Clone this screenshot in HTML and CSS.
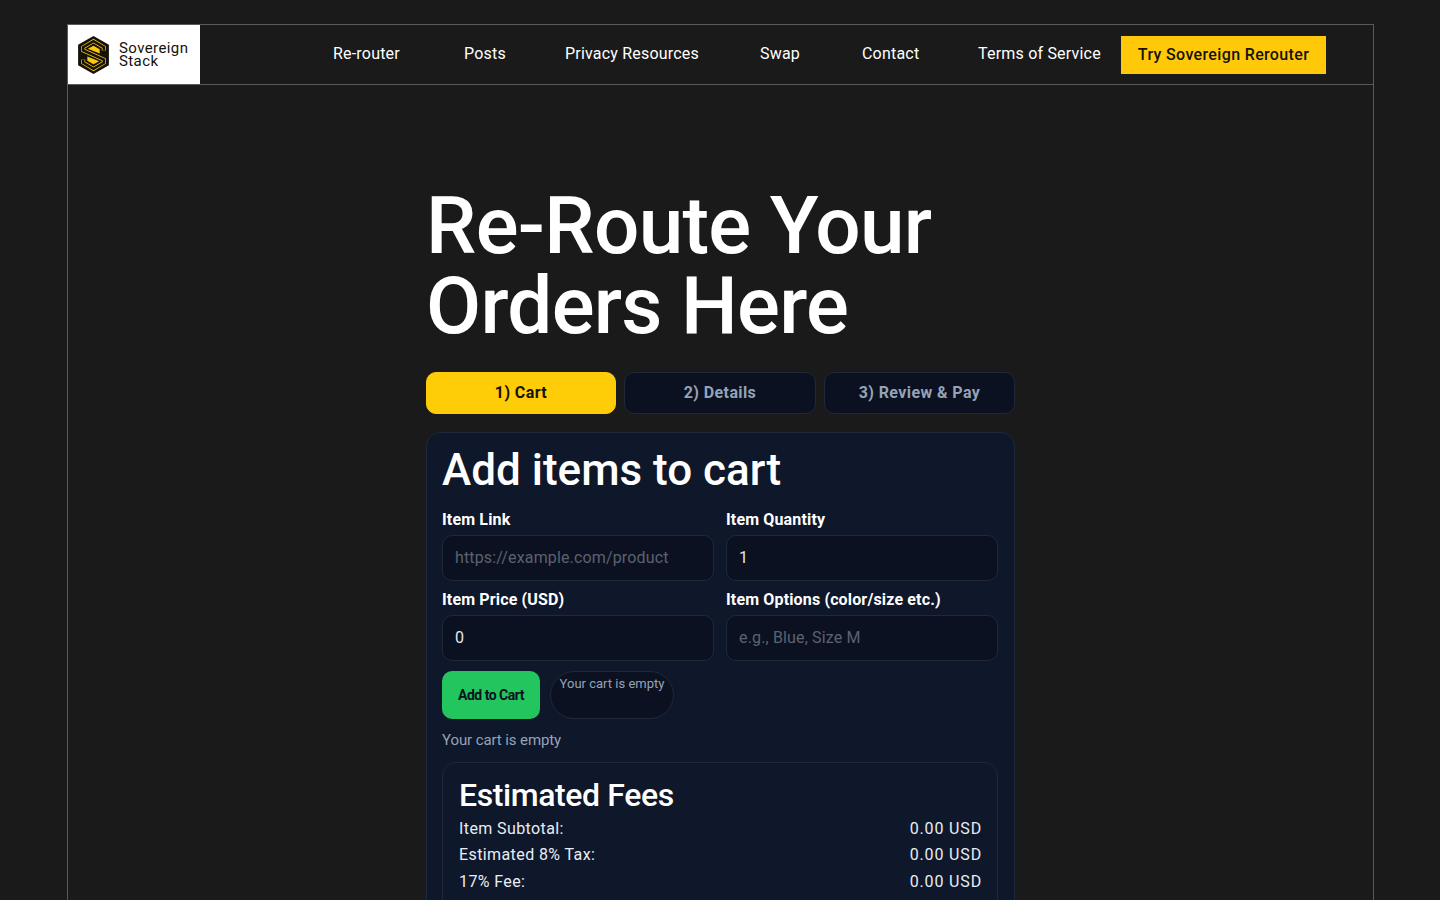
FILE: index.html
```html
<!DOCTYPE html>
<html lang="en">
<head>
    <meta charset="UTF-8">
    <meta name="viewport" content="width=device-width, initial-scale=1.0">
    <title>Sovereign Stack Re-router</title>
    <link rel="stylesheet" href="styles.css">
</head>
<body>
    <div class="frame">
        <header class="topbar">
            <a class="logo" href="#">
                <svg class="logo-mark" viewBox="0 0 30 37" width="31" height="38">
                    <polygon points="15,0 30,8.500 30,28.500 15,37 0,28.500 0,8.500" fill="#15120a"/>
                    <polygon points="15,9.500 21,13 21,17 9.500,12.500" fill="#fcc70c"/>
                    <polygon points="15,27.500 9,24 9,20 20.500,24.500" fill="#fcc70c"/>
                    <path d="M25 14V11L15 5 5 11V14L25 23V26L15 32 5 26V23" fill="none" stroke="#fcc70c" stroke-width="3.800"/>
                    <path d="M25 14V11L15 5 5 11V14L25 23V26L15 32 5 26V23" fill="none" stroke="#15120a" stroke-width="2.400"/>
                </svg>
                <span class="logo-text">Sovereign<br>Stack</span>
            </a>
            <nav class="nav">
                <a href="#">Re-router</a>
                <a href="#">Posts</a>
                <a href="#">Privacy Resources</a>
                <a href="#">Swap</a>
                <a href="#">Contact</a>
                <a href="#">Terms of Service</a>
            </nav>
            <a class="try-btn" href="#">Try Sovereign Rerouter</a>
        </header>

        <main class="content">
            <h1>Re-Route Your<br>Orders Here</h1>

            <div class="tabs">
                <button class="tab active" type="button">1) Cart</button>
                <button class="tab" type="button">2) Details</button>
                <button class="tab" type="button">3) Review &amp; Pay</button>
            </div>

            <section class="card">
                <h2>Add items to cart</h2>
                <div class="fields">
                    <div class="field">
                        <label for="item_link">Item Link</label>
                        <input type="text" id="item_link" placeholder="https://example.com/product">
                    </div>
                    <div class="field">
                        <label for="item_qty">Item Quantity</label>
                        <input type="text" id="item_qty" value="1">
                    </div>
                    <div class="field">
                        <label for="item_price">Item Price (USD)</label>
                        <input type="text" id="item_price" value="0">
                    </div>
                    <div class="field">
                        <label for="item_options">Item Options (color/size etc.)</label>
                        <input type="text" id="item_options" placeholder="e.g., Blue, Size M">
                    </div>
                </div>

                <div class="cart-actions">
                    <button class="add-btn" type="button">Add to Cart</button>
                    <span class="cart-pill">Your cart is empty</span>
                </div>
                <p class="cart-note">Your cart is empty</p>

                <div class="fees">
                    <h3>Estimated Fees</h3>
                    <div class="fee-row"><span>Item Subtotal:</span><span class="fee-value">0.00 USD</span></div>
                    <div class="fee-row"><span>Estimated 8% Tax:</span><span class="fee-value">0.00 USD</span></div>
                    <div class="fee-row"><span>17% Fee:</span><span class="fee-value">0.00 USD</span></div>
                </div>
            </section>
        </main>
    </div>
</body>
</html>
```

FILE: styles.css
```css
html, body {
    height: 900px;
    overflow: hidden;
}

body {
    margin: 0;
    padding: 24px 66px 0 67px;
    background-color: #1a1a1a;
    color: #fff;
    font-family: Roboto, "Liberation Sans", sans-serif;
}

a {
    color: inherit;
    text-decoration: none;
}

.frame {
    height: 900px;
    border: 1px solid #5a5a5a;
    border-bottom: none;
}

.topbar {
    display: flex;
    align-items: center;
    height: 59px;
    border-bottom: 1px solid #5a5a5a;
}

.logo {
    display: flex;
    align-items: center;
    gap: 10px;
    width: 122px;
    height: 59px;
    padding-left: 10px;
    background-color: #fff;
    color: #15120a;
}

.logo-text {
    font-size: 15px;
    line-height: 13px;
    letter-spacing: 0.4px;
}

.nav {
    display: grid;
    grid-template-columns: 71px 41px 135px 42px 56px 121px;
    gap: 60px;
    margin-left: 133px;
    padding-bottom: 2px;
    font-size: 16px;
    letter-spacing: 0.2px;
    white-space: nowrap;
}

.try-btn {
    margin-left: 22px;
    width: 205px;
    height: 38px;
    line-height: 38px;
    text-align: center;
    background-color: #ffc90a;
    color: #15120a;
    font-size: 16px;
    font-weight: 500;
    letter-spacing: 0.35px;
}

.content {
    width: 589px;
    margin-left: 358px;
    padding-top: 101px;
}

h1 {
    margin: 0 0 26px;
    font-size: 80px;
    line-height: 80px;
    font-weight: 500;
    letter-spacing: -0.7px;
}

.tabs {
    display: grid;
    grid-template-columns: 190px 192px 191px;
    gap: 8px;
    margin-bottom: 18px;
}

.tab {
    height: 42px;
    padding: 0 0 2px;
    border: 1px solid #1e293b;
    border-radius: 10px;
    background-color: #0b1120;
    color: #94a3b8;
    font-family: inherit;
    font-size: 16px;
    font-weight: 700;
    letter-spacing: 0.4px;
}

.tab.active {
    background-color: #ffcc08;
    border-color: #ffcc08;
    color: #15120a;
}

.card {
    padding: 12px 16px 12px 15px;
    background-color: #0f172a;
    border: 1px solid #1e293b;
    border-radius: 14px;
}

h2 {
    margin: 0 0 15px;
    font-size: 44px;
    line-height: 50px;
    font-weight: 500;
}

.fields {
    display: grid;
    grid-template-columns: 1fr 1fr;
    gap: 9px 12px;
}

.field label {
    display: block;
    margin-bottom: 5px;
    font-size: 16px;
    line-height: 20px;
    font-weight: 700;
    letter-spacing: 0.15px;
}

.field input {
    display: block;
    box-sizing: border-box;
    width: 100%;
    height: 46px;
    padding: 0 12px 2px;
    background-color: #0b1120;
    border: 1px solid #1e293b;
    border-radius: 10px;
    color: #e5e7eb;
    font-family: inherit;
    font-size: 16px;
    letter-spacing: 0.15px;
}

.field input::placeholder {
    color: #5b6270;
}

.cart-actions {
    display: flex;
    gap: 10px;
    margin-top: 10px;
}

.add-btn {
    width: 98px;
    height: 48px;
    border: none;
    border-radius: 10px;
    background-color: #22c55e;
    color: #0b1120;
    font-family: inherit;
    font-size: 14px;
    font-weight: 700;
    letter-spacing: -0.5px;
}

.cart-pill {
    box-sizing: border-box;
    width: 124px;
    height: 48px;
    padding: 4px 8px;
    background-color: #0b1120;
    border: 1px solid #1e293b;
    border-radius: 24px;
    color: #94a3b8;
    font-size: 13px;
    line-height: 16px;
    text-align: center;
}

.cart-note {
    margin: 11px 0 12px;
    color: #94a3b8;
    font-size: 15px;
    line-height: 20px;
    letter-spacing: -0.1px;
}

.fees {
    padding: 14px 15px 16px 16px;
    border: 1px solid #1e293b;
    border-radius: 14px;
}

h3 {
    margin: 0 0 3px;
    font-size: 32px;
    line-height: 36px;
    font-weight: 500;
    letter-spacing: -0.4px;
}

.fee-row {
    display: flex;
    justify-content: space-between;
    height: 26.4px;
    line-height: 26px;
    font-size: 16px;
    color: #e8edf4;
    letter-spacing: 0.4px;
}

.fee-value {
    letter-spacing: 0.85px;
}
```
